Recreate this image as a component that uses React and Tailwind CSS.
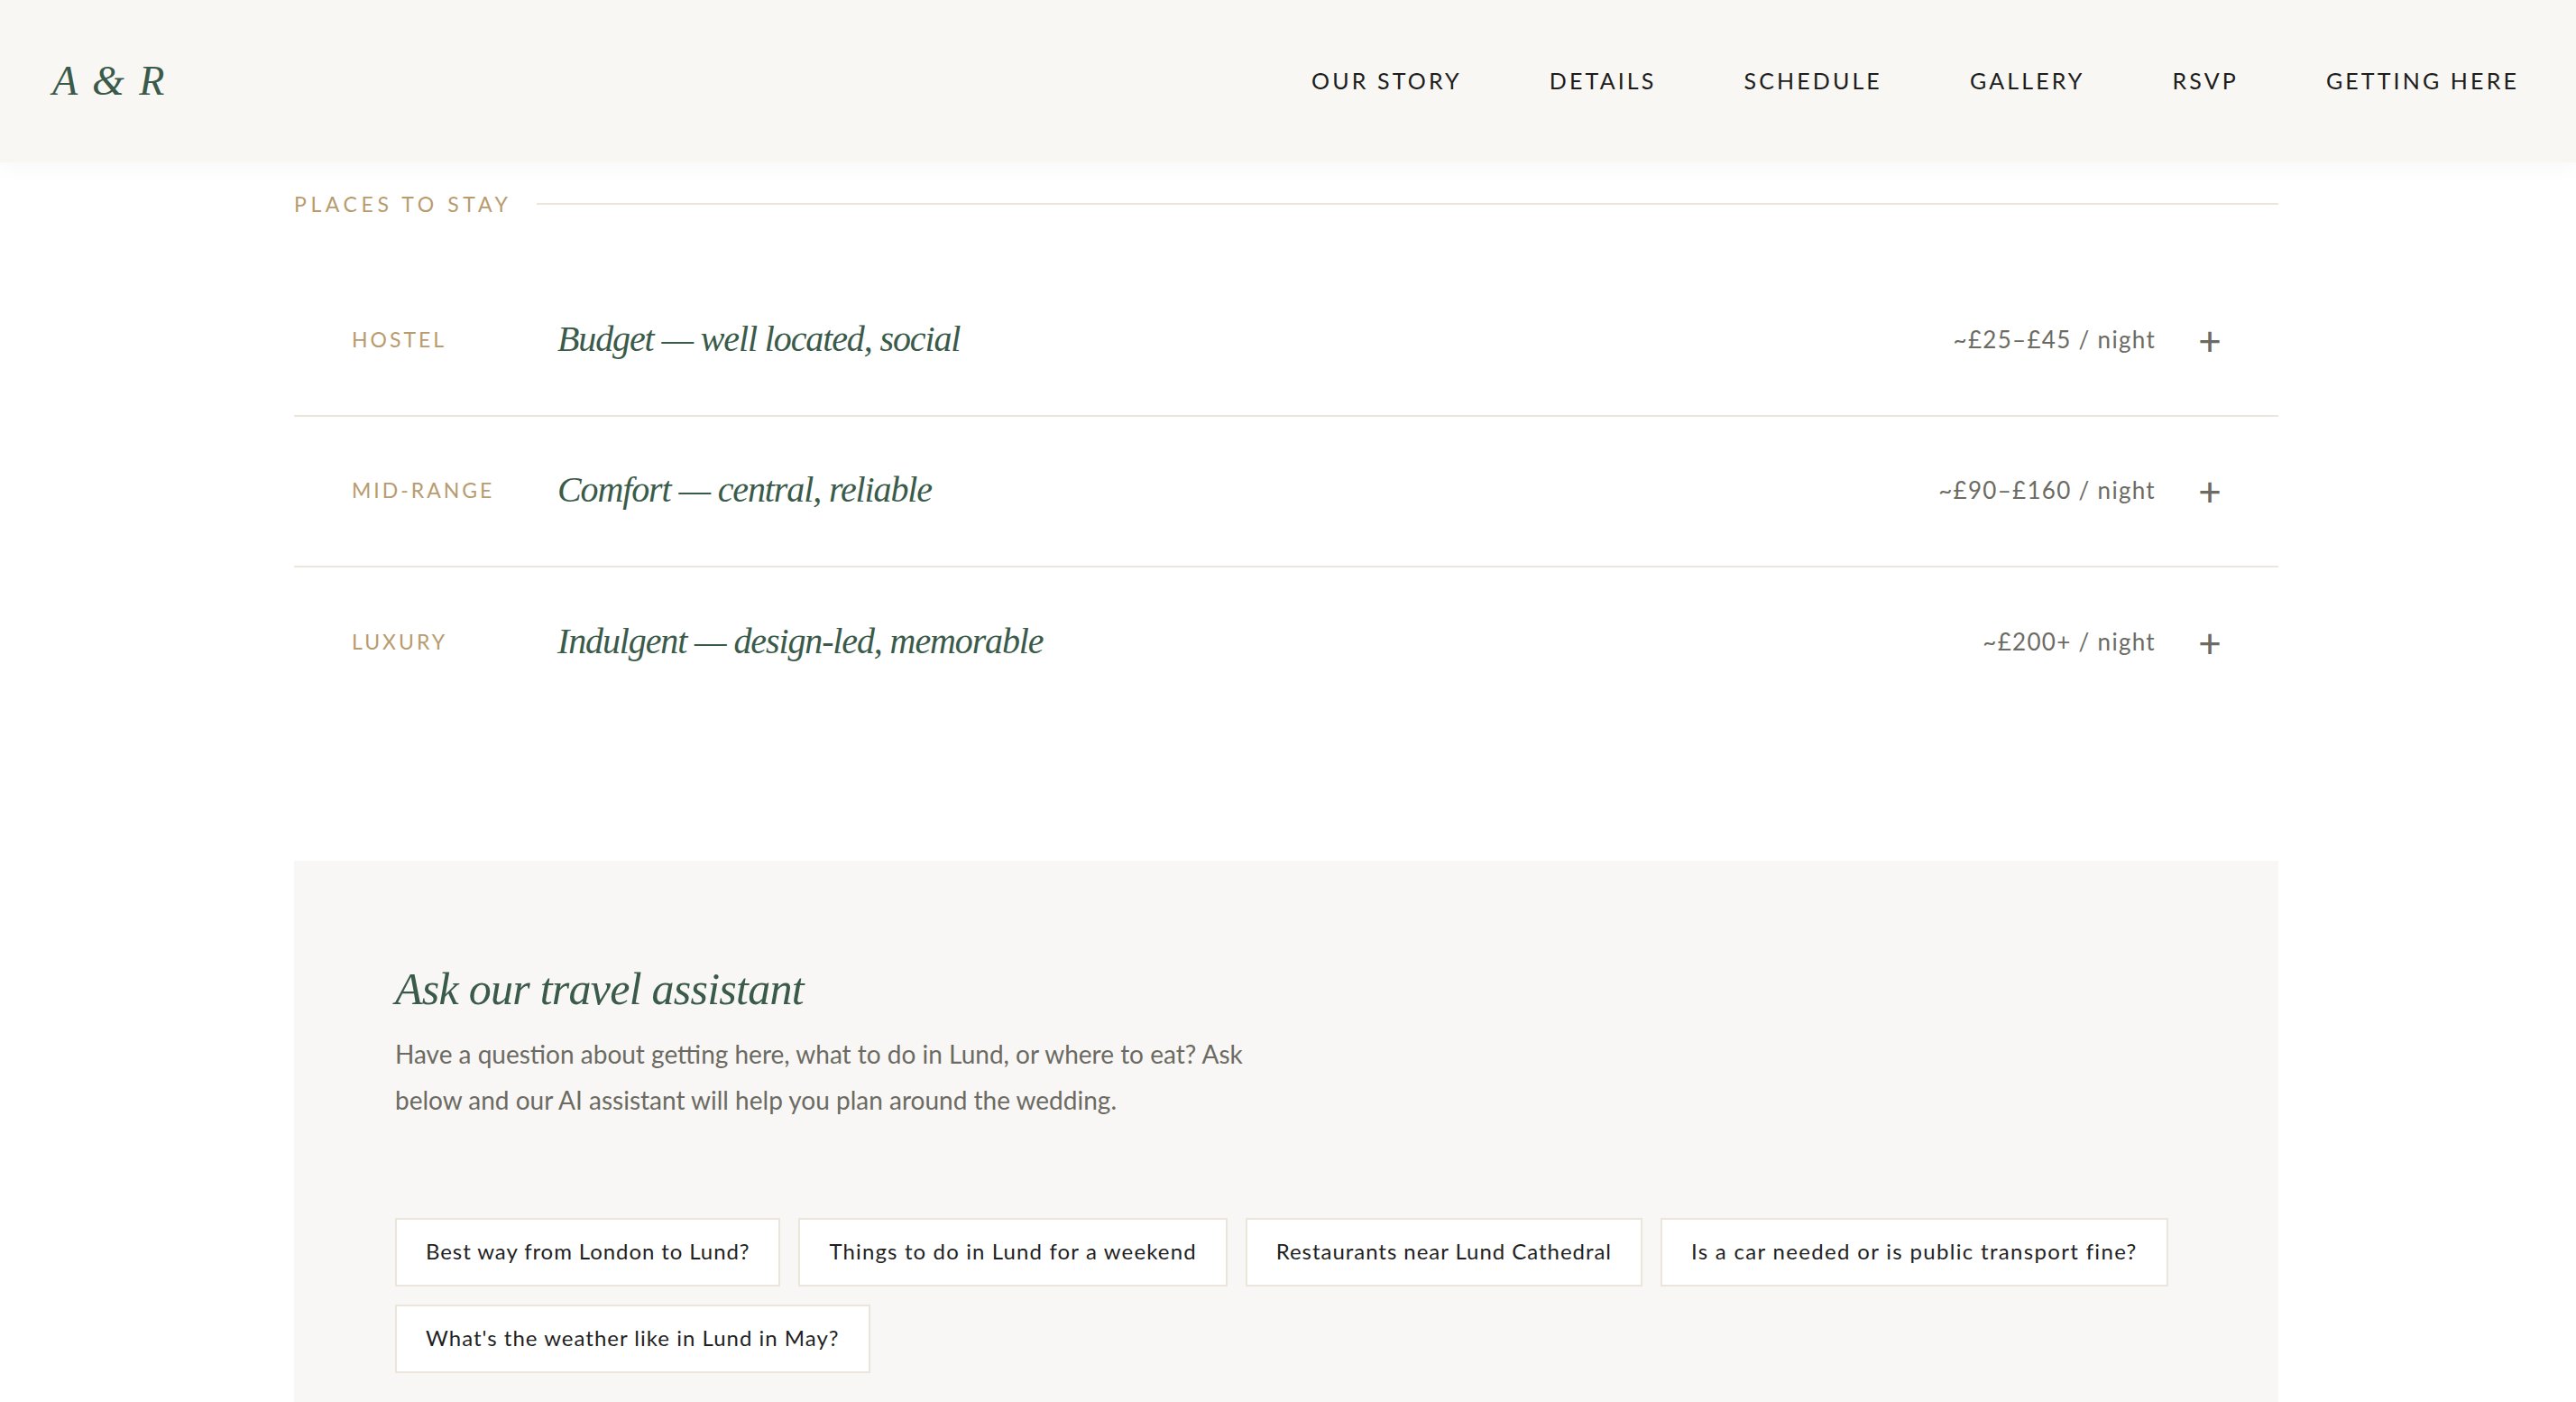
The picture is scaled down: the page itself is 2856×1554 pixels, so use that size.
const sans = "font-['Lato','Noto_Sans',sans-serif]";

const navItems = ["OUR STORY", "DETAILS", "SCHEDULE", "GALLERY", "RSVP", "GETTING HERE"];

const stays = [
  { tier: "HOSTEL", title: "Budget — well located, social", price: "~£25–£45 / night" },
  { tier: "MID-RANGE", title: "Comfort — central, reliable", price: "~£90–£160 / night" },
  { tier: "LUXURY", title: "Indulgent — design-led, memorable", price: "~£200+ / night" },
];

const prompts = [
  { text: "Best way from London to Lund?", track: "tracking-[0.038em]" },
  { text: "Things to do in Lund for a weekend", track: "tracking-[0.047em]" },
  { text: "Restaurants near Lund Cathedral", track: "tracking-[0.04em]" },
  { text: "Is a car needed or is public transport fine?", track: "tracking-[0.055em]" },
  { text: "What's the weather like in Lund in May?", track: "tracking-[0.042em]" },
];

function StayRow({ tier, title, price, last }) {
  return (
    <div className={`flex h-[167px] items-center pb-[3px] pl-16 pr-[66px] ${last ? "" : "border-b-2 border-[#ebe5da]"}`}>
      <span className="w-[228px] shrink-0 text-[23px] tracking-[0.13em] text-[#b89b6e]">{tier}</span>
      <span className="flex-1 font-['Liberation_Serif',serif] text-[40px] italic tracking-[-0.028em] text-[#3a5a4a]">{title}</span>
      <span className="text-[26px] tracking-[0.05em] text-[#6b6b63]">{price}</span>
      <span className="ml-[50px] flex w-[20px] justify-center pt-[2px] text-[44px] font-medium leading-none text-[#6b6b63]">+</span>
    </div>
  );
}

export default function App() {
  return (
    <div className={`h-[1554px] overflow-hidden bg-white ${sans}`}>
      <header className="relative z-10 flex h-[180px] items-center justify-between bg-[#f8f7f3] pl-[58px] pr-[63px] shadow-[0_4px_24px_rgba(0,0,0,0.04)]">
        <div className="pb-[2px] font-['Liberation_Serif',serif] text-[46px] italic tracking-[0.056em] text-[#3a5a4a]">A &amp; R</div>
        <nav className="flex gap-[97px] text-[25px] tracking-[0.125em] text-[#1c1c1c]">
          {navItems.map((item) => (
            <span key={item}>{item}</span>
          ))}
        </nav>
      </header>

      <main className="ml-[326px] w-[2200px]">
        <div className="flex items-center gap-7 pt-[29px]">
          <span className="text-[23px] tracking-[0.2em] text-[#b89b6e]">PLACES TO STAY</span>
          <div className="h-[2px] flex-1 bg-[#ebe5da]" />
        </div>

        <div className="mt-[51.5px]">
          {stays.map((s, i) => (
            <StayRow key={s.tier} {...s} last={i === stays.length - 1} />
          ))}
        </div>

        <section className="mt-[158px] h-[700px] bg-[#f9f7f5] px-28 pt-[117px]">
          <h2 className="font-['Liberation_Serif',serif] text-[50px] font-normal italic leading-none tracking-[-0.015em] text-[#3a5a4a]">Ask our travel assistant</h2>
          <p className="mt-[22px] max-w-[960px] text-[28px] leading-[51px] text-[#6b6b63]">
            Have a question about getting here, what to do in Lund, or where to eat? Ask below and our AI assistant will help you plan around the wedding.
          </p>
          <div className="mt-[105px] flex flex-wrap gap-5">
            {prompts.map((p) => (
              <button key={p.text} className={`h-[76px] border-2 border-[#ece5dc] bg-white px-8 pb-[2px] text-[24px] text-[#1f1f1f] ${p.track}`}>
                {p.text}
              </button>
            ))}
          </div>
        </section>
      </main>
    </div>
  );
}
